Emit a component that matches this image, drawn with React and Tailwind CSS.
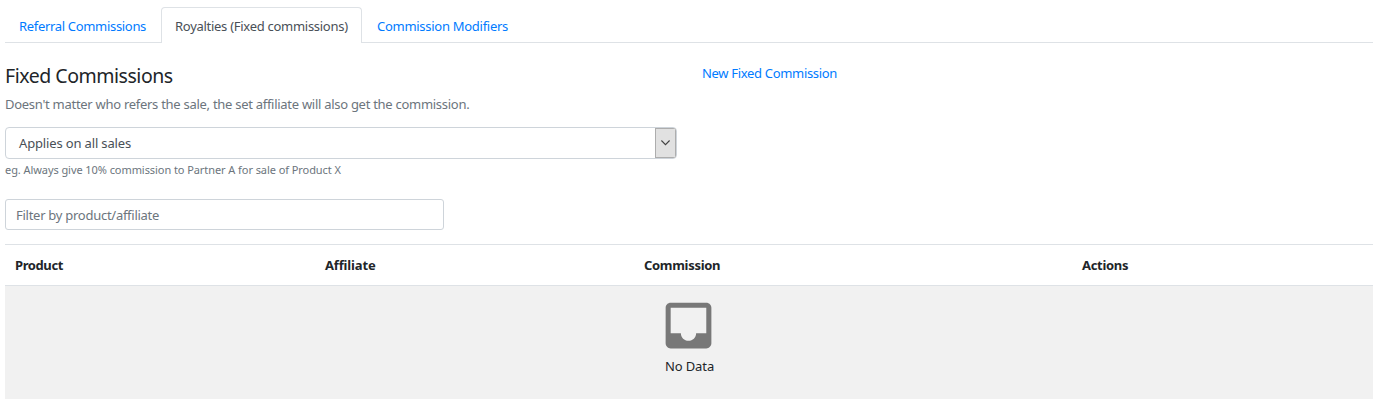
import React from "react";

const columns = [
  { label: "Product", width: "w-[310px]", tracking: "tracking-[-0.4px]" },
  { label: "Affiliate", width: "w-[319px]", tracking: "tracking-[-0.15px]" },
  { label: "Commission", width: "w-[438px]", tracking: "tracking-[-0.3px]" },
  { label: "Actions", width: "flex-1", tracking: "tracking-[-0.3px]" },
];

function Tabs() {
  return (
    <nav className="flex h-9 items-end border-b border-[#dee2e6] text-[13px] leading-5">
      <a className="flex h-9 w-[156px] items-center pl-3.5 pt-1 tracking-[-0.32px] whitespace-nowrap text-[#007bff]">
        <span>Referral Commissions</span>
      </a>
      <a className="-mb-px flex h-9 w-[201px] items-center rounded-t border border-b-0 border-[#dee2e6] bg-white pl-[13px] pt-px tracking-[-0.28px] whitespace-nowrap text-[#495057]">
        <span>Royalties (Fixed commissions)</span>
      </a>
      <a className="flex h-9 items-center pl-[15px] pt-1 tracking-[-0.28px] whitespace-nowrap text-[#007bff]">
        <span>Commission Modifiers</span>
      </a>
    </nav>
  );
}

function ScopeSelect() {
  return (
    <div className="mt-[13px] flex h-8 w-[672px] justify-between overflow-hidden rounded border border-[#ced4da] text-[13px] text-[#495057]">
      <span className="self-center pl-[13px] leading-5 tracking-[-0.15px]">Applies on all sales</span>
      <span className="flex w-[21px] items-center justify-center border border-[#adadad] bg-[#e1e1e1] pb-px">
        <svg width="9" height="6" viewBox="0 0 9 6" fill="none" stroke="#404040" strokeWidth="1.1">
          <path d="M.4.5 4.5 4.6 8.6.5" />
        </svg>
      </span>
    </div>
  );
}

function CommissionTable() {
  return (
    <section className="mt-3.5 border-t border-[#dee2e6]">
      <div className="flex h-[41px] items-center border-b border-[#dee2e6] pl-2.5 text-[13px] leading-5 font-bold">
        {columns.map((c) => (
          <div key={c.label} className={c.width}>
            <span className={c.tracking}>{c.label}</span>
          </div>
        ))}
      </div>
      <div className="flex h-[113px] flex-col items-center bg-[#f1f1f1] pt-[9px]">
        <svg className="mr-px" width="61" height="61" viewBox="0 0 24 24" fill="#787878">
          <path d="M19 3H4.99c-1.11 0-1.98.89-1.98 2L3 19c0 1.1.88 2 1.99 2H19c1.1 0 2-.9 2-2V5c0-1.11-.9-2-2-2zm0 12h-4c0 1.66-1.35 3-3 3s-3-1.34-3-3H4.99V5H19v10z" />
        </svg>
        <span className="pl-px text-[13px] leading-5 tracking-[-0.1px]">No Data</span>
      </div>
    </section>
  );
}

export default function App() {
  return (
    <main className="h-[407px] overflow-hidden bg-white pt-[7px] pr-1 pl-[5px] font-['Noto_Sans','Open_Sans',sans-serif] text-[#212529]">
      <Tabs />
      <div className="flex pt-5">
        <header className="w-[697px]">
          <h1 className="text-[19.5px] leading-[26px] tracking-[-0.47px]">
            <span>Fixed Commissions</span>
          </h1>
          <p className="mt-[5px] text-[13px] leading-5 tracking-[-0.28px] text-[#6c757d]">
            <span>Doesn't matter who refers the sale, the set affiliate will also get the commission.</span>
          </p>
        </header>
        <a className="text-[13px] leading-5 tracking-[-0.32px] text-[#007bff]">
          <span>New Fixed Commission</span>
        </a>
      </div>
      <ScopeSelect />
      <p className="mt-[3px] text-[11px] leading-4 tracking-[-0.07px] text-[#6c757d]">
        <span>eg. Always give 10% commission to Partner A for sale of Product X</span>
      </p>
      <div className="mt-[21px] flex h-[31px] w-[439px] items-center rounded-[3px] border border-[#ced4da] pl-2.5 text-[13px] leading-5 tracking-[-0.27px] text-[#6c757d]">
        <span>Filter by product/affiliate</span>
      </div>
      <CommissionTable />
    </main>
  );
}
